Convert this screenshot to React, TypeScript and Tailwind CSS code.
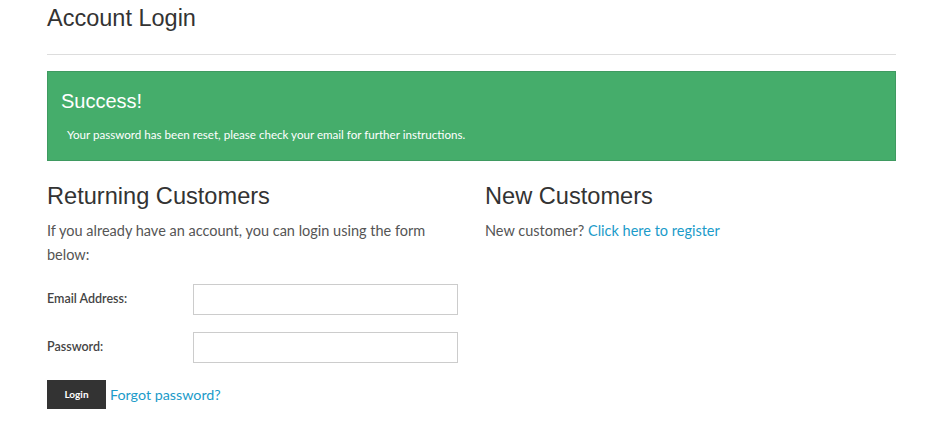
export default function App() {
  return (
    <div className="min-h-screen bg-white">
      <div className="ml-[47px] w-[849px] pt-[3px]">
        <h1
          className="text-[23.5px] leading-[30px] text-[#333]"
          style={{ fontFamily: '"Liberation Sans", Arial, sans-serif' }}
        >
          Account Login
        </h1>
        <div className="mt-[21px] border-b border-[#ddd]" />

        <div className="mt-[16px] h-[90px] border border-[#3f9a61] bg-[#45ad6b] px-[13px] pt-[17px]">
          <h2
            className="text-[20px] leading-[24px] text-white"
            style={{ fontFamily: '"Liberation Sans", Arial, sans-serif' }}
          >
            Success!
          </h2>
          <p
            className="mt-[14px] pl-[6px] text-[11.6px] leading-[16px] text-white"
            style={{ fontFamily: 'Lato, sans-serif' }}
          >
            Your password has been reset, please check your email for further instructions.
          </p>
        </div>

        <div className="mt-[20px] grid grid-cols-2 gap-x-[27px]">
          <div>
            <h2
              className="text-[23.6px] leading-[30px] text-[#333]"
              style={{ fontFamily: '"Liberation Sans", Arial, sans-serif' }}
            >
              Returning Customers
            </h2>
            <p
              className="mt-[8px] pr-[30px] text-[14.5px] leading-[24px] text-[#555]"
              style={{ fontFamily: 'Lato, sans-serif' }}
            >
              If you already have an account, you can login using the form below:
            </p>
            <form className="mt-[17px] flex flex-col gap-[17px]" style={{ fontFamily: 'Lato, sans-serif' }}>
              <div className="flex items-center">
                <label className="w-[146px] text-[12.5px] font-semibold text-[#444]">Email Address:</label>
                <input type="email" className="h-[31px] w-[265px] border border-[#ccc] bg-white px-2" />
              </div>
              <div className="flex items-center">
                <label className="w-[146px] text-[12.5px] font-semibold text-[#444]">Password:</label>
                <input type="password" className="h-[31px] w-[265px] border border-[#ccc] bg-white px-2" />
              </div>
              <div className="flex items-center gap-[4px]">
                <button
                  type="button"
                  className="h-[29px] w-[59px] bg-[#333] text-[10px] font-bold text-white"
                >
                  Login
                </button>
                <a href="#" className="text-[14.3px] text-[#1b9bc9]">
                  Forgot password?
                </a>
              </div>
            </form>
          </div>
          <div>
            <h2
              className="text-[23.6px] leading-[30px] text-[#333]"
              style={{ fontFamily: '"Liberation Sans", Arial, sans-serif' }}
            >
              New Customers
            </h2>
            <p
              className="mt-[8px] text-[14.5px] leading-[24px] text-[#555]"
              style={{ fontFamily: 'Lato, sans-serif' }}
            >
              New customer?{' '}
              <a href="#" className="text-[#1b9bc9]">
                Click here to register
              </a>
            </p>
          </div>
        </div>
      </div>
    </div>
  );
}
